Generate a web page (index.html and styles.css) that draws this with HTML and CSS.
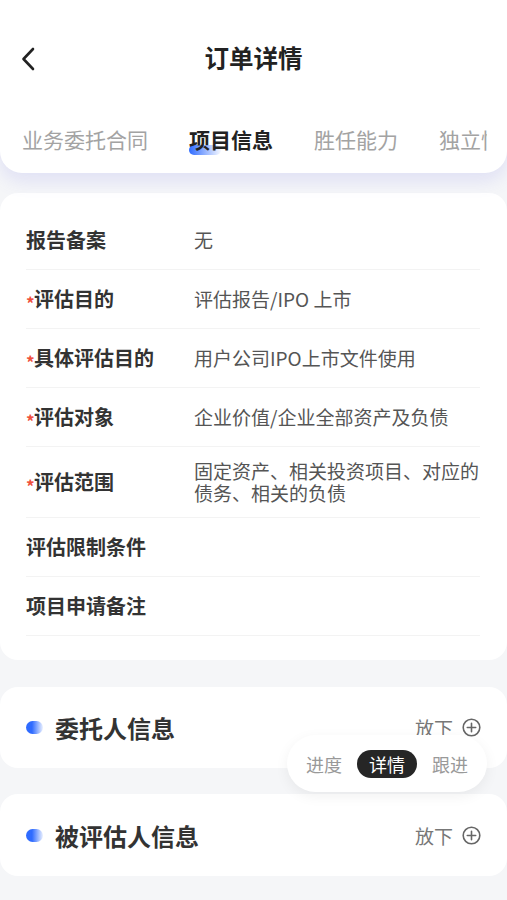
FILE: index.html
```html
<!DOCTYPE html>
<html lang="zh-CN">
<head>
    <meta charset="UTF-8">
    <meta name="viewport" content="width=device-width, initial-scale=1.0">
    <title>订单详情</title>
    <link rel="stylesheet" href="styles.css">
</head>
<body>
    <header class="top">
        <div class="nav">
            <svg class="back" width="14" height="24" viewBox="0 0 14 24">
                <path d="M12 2 L2.5 12 L12 22" fill="none" stroke="#222" stroke-width="2.6" stroke-linecap="round" stroke-linejoin="round"/>
            </svg>
            <h1>订单详情</h1>
        </div>
        <div class="tabs">
            <span class="tab">业务委托合同</span>
            <span class="tab active">项目信息</span>
            <span class="tab">胜任能力</span>
            <span class="tab">独立性</span>
        </div>
    </header>

    <section class="card info">
        <div class="row">
            <div class="label">报告备案</div>
            <div class="value">无</div>
        </div>
        <div class="row">
            <div class="label"><span class="star">*</span>评估目的</div>
            <div class="value">评估报告/IPO 上市</div>
        </div>
        <div class="row">
            <div class="label"><span class="star">*</span>具体评估目的</div>
            <div class="value">用户公司IPO上市文件使用</div>
        </div>
        <div class="row">
            <div class="label"><span class="star">*</span>评估对象</div>
            <div class="value">企业价值/企业全部资产及负债</div>
        </div>
        <div class="row">
            <div class="label"><span class="star">*</span>评估范围</div>
            <div class="value">固定资产、相关投资项目、对应的债务、相关的负债</div>
        </div>
        <div class="row">
            <div class="label">评估限制条件</div>
            <div class="value"></div>
        </div>
        <div class="row">
            <div class="label">项目申请备注</div>
            <div class="value"></div>
        </div>
    </section>

    <section class="card fold first">
        <span class="dot"></span>
        <h3>委托人信息</h3>
        <span class="toggle">放下
            <svg width="19" height="19" viewBox="0 0 19 19">
                <circle cx="9.5" cy="9.5" r="8.3" fill="none" stroke="#666" stroke-width="1.6"/>
                <path d="M9.5 5.3 V13.7 M5.3 9.5 H13.7" stroke="#666" stroke-width="1.6" stroke-linecap="round"/>
            </svg>
        </span>
    </section>

    <section class="card fold">
        <span class="dot"></span>
        <h3>被评估人信息</h3>
        <span class="toggle">放下
            <svg width="19" height="19" viewBox="0 0 19 19">
                <circle cx="9.5" cy="9.5" r="8.3" fill="none" stroke="#666" stroke-width="1.6"/>
                <path d="M9.5 5.3 V13.7 M5.3 9.5 H13.7" stroke="#666" stroke-width="1.6" stroke-linecap="round"/>
            </svg>
        </span>
    </section>

    <nav class="switcher">
        <span class="sw-item">进度</span>
        <span class="sw-item current">详情</span>
        <span class="sw-item">跟进</span>
    </nav>
</body>
</html>
```

FILE: styles.css
```css
body {
    font-family: "Noto Sans CJK SC", "Noto Sans", sans-serif;
    margin: 0;
    padding: 0 0 24px;
    background-color: #f5f6f8;
    color: #333;
    position: relative;
    min-height: 876px;
}
.top {
    background: #fff;
    border-radius: 0 0 22px 22px;
    box-shadow: 0 8px 18px rgba(110, 110, 230, 0.16);
    position: relative;
}
.nav {
    height: 116px;
    display: flex;
    align-items: center;
    justify-content: center;
    position: relative;
}
.nav h1 {
    margin: 0;
    font-size: 24.5px;
    font-weight: 700;
    color: #222;
    line-height: 32px;
}
.back {
    position: absolute;
    left: 21px;
    top: 47px;
}
.tabs {
    display: flex;
    gap: 41px;
    padding: 9px 0 20px 22px;
    margin-right: 20px;
    white-space: nowrap;
    overflow: hidden;
}
.tab {
    font-size: 21px;
    line-height: 28px;
    color: #a3a3a3;
    position: relative;
    flex-shrink: 0;
}
.tab.active {
    color: #222;
    font-weight: 700;
    z-index: 0;
}
.tab.active::before {
    content: "";
    position: absolute;
    left: 0;
    bottom: -2px;
    width: 32px;
    height: 10px;
    border-radius: 6px;
    background: linear-gradient(90deg, #2f6bff, rgba(90, 140, 255, 0.05));
    z-index: -1;
}
.card {
    background: #fff;
    border-radius: 18px;
}
.info {
    margin-top: 20px;
    padding: 18px 27px 24px 26px;
}
.row {
    display: flex;
    align-items: center;
    min-height: 59px;
    box-sizing: border-box;
    padding: 13px 0;
    border-bottom: 1px solid #f3f3f3;
}
.label {
    width: 168px;
    flex-shrink: 0;
    font-size: 20px;
    font-weight: 700;
    color: #333;
    line-height: 28px;
    display: flex;
    align-items: center;
}
.star {
    color: #f0503c;
    font-size: 17px;
    font-weight: 700;
    width: 8px;
    line-height: 1;
    position: relative;
    top: 3px;
}
.value {
    flex: 1;
    margin-right: -8px;
    font-size: 19px;
    line-height: 22px;
    color: #555;
}
.fold {
    display: flex;
    align-items: center;
    height: 81px;
    padding: 0 26px;
    margin-top: 26px;
}
.fold.first {
    margin-top: 27px;
}
.fold + .fold {
    height: 82px;
}
.dot {
    width: 17px;
    height: 13px;
    border-radius: 7px;
    background: linear-gradient(90deg, #2f6bff 35%, rgba(120, 160, 255, 0.15));
    margin-right: 12px;
}
.fold h3 {
    margin: 0;
    font-size: 24px;
    font-weight: 700;
    color: #333;
    flex: 1;
}
.toggle {
    display: flex;
    align-items: center;
    gap: 9px;
    font-size: 19px;
    color: #777;
}
.switcher {
    position: absolute;
    top: 735px;
    right: 20px;
    width: 200px;
    height: 57px;
    box-sizing: border-box;
    padding: 0 19px;
    display: flex;
    align-items: center;
    justify-content: space-between;
    background: #fff;
    border-radius: 29px;
    box-shadow: 0 4px 14px rgba(0, 0, 0, 0.06);
}
.sw-item {
    font-size: 18px;
    color: #999;
    line-height: 28px;
}
.sw-item.current {
    background: #262626;
    color: #fff;
    padding: 0 12px;
    border-radius: 15px;
}
```
